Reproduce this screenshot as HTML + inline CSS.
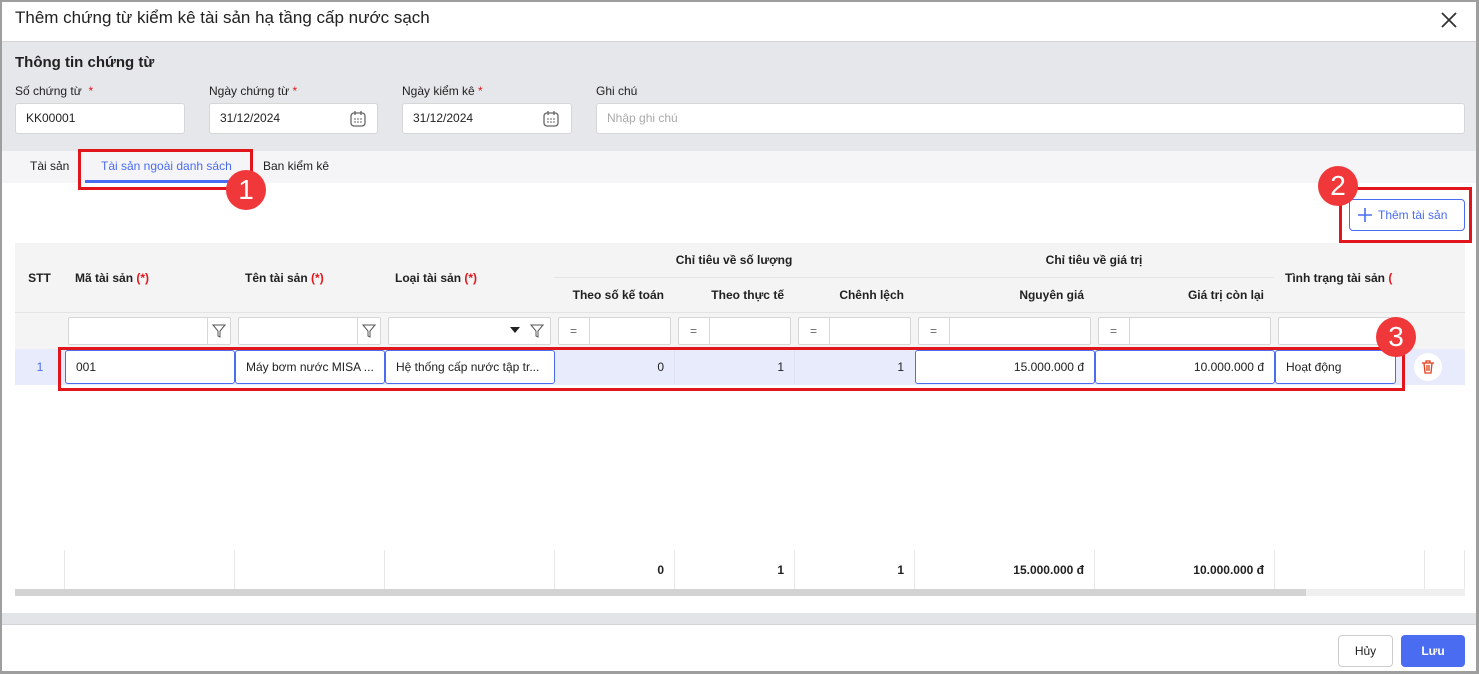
<!DOCTYPE html><html><head><meta charset="utf-8"><style>
*{box-sizing:border-box;margin:0;padding:0}
body{width:1479px;height:674px;overflow:hidden;font-family:"Liberation Sans",sans-serif;font-size:12px;color:#212121;background:#fff;position:relative}
.a{position:absolute}
.inp{position:absolute;background:#fff;border:1px solid #d6d6d6;border-radius:3px;height:31px;padding-left:10px;line-height:29px;font-size:12px}
.th{position:absolute;background:#f4f4f4;border-right:1px solid #e4e4e4;border-bottom:1px solid #e4e4e4;font-weight:bold;font-size:12px;display:flex;align-items:center}
.fc{position:absolute;top:317px;height:28px;background:#fff;border:1px solid #d6d6d6;border-radius:2px}
.cell{position:absolute;top:350px;height:34px;line-height:34px;font-size:12px}
.ed{position:absolute;top:350px;height:34px;line-height:32px;border:1px solid #4a6cf0;border-radius:3px;background:#fff;padding:0 10px;font-size:12px;white-space:nowrap;overflow:hidden}
.tot{position:absolute;top:550px;height:40px;line-height:40px;font-weight:bold;text-align:right;padding-right:10px;border-right:1px solid #e8e8e8}
.red{position:absolute;border:3px solid #e0161c}
.circ{position:absolute;width:40px;height:40px;border-radius:50%;background:#f0383a;color:#fff;font-size:28px;text-align:center;line-height:40px}
.req{color:#e0161c}
</style></head><body>
<div class="a" style="left:0;top:0;width:1479px;height:674px;border:2px solid #9e9e9e;border-right-width:3px;border-bottom-width:3px;z-index:50;pointer-events:none"></div>
<div class="a" style="left:15px;top:8px;font-size:17px">Thêm chứng từ kiểm kê tài sản hạ tầng cấp nước sạch</div>
<svg class="a" style="left:1440px;top:11px" width="18" height="18"><path d="M2 2L16 16M16 2L2 16" stroke="#333" stroke-width="1.8"/></svg>
<div class="a" style="left:0;top:41px;width:1479px;height:110px;background:#e6e7eb;border-top:1px solid #d4d4d8"></div>
<div class="a" style="left:15px;top:54px;font-size:15px;font-weight:bold">Thông tin chứng từ</div>
<div class="a" style="left:15px;top:84px">Số chứng từ &nbsp;<span class="req">*</span></div>
<div class="a" style="left:209px;top:84px">Ngày chứng từ <span class="req">*</span></div>
<div class="a" style="left:402px;top:84px">Ngày kiểm kê <span class="req">*</span></div>
<div class="a" style="left:596px;top:84px">Ghi chú</div>
<div class="inp" style="left:15px;top:103px;width:170px">KK00001</div>
<div class="inp" style="left:209px;top:103px;width:169px">31/12/2024</div>
<div class="inp" style="left:402px;top:103px;width:170px">31/12/2024</div>
<div class="inp" style="left:596px;top:103px;width:869px;color:#aaa">Nhập ghi chú</div>
<svg class="a" style="left:349px;top:110px" width="18" height="18"><rect x="2" y="3" width="14" height="13" rx="3" fill="none" stroke="#666" stroke-width="1.3"/><path d="M6 1v4M12 1v4" stroke="#666" stroke-width="1.3"/><path d="M5 9h2M8 9h2M11 9h2M5 12h2M8 12h2M11 12h2" stroke="#666"/></svg>
<svg class="a" style="left:542px;top:110px" width="18" height="18"><rect x="2" y="3" width="14" height="13" rx="3" fill="none" stroke="#666" stroke-width="1.3"/><path d="M6 1v4M12 1v4" stroke="#666" stroke-width="1.3"/><path d="M5 9h2M8 9h2M11 9h2M5 12h2M8 12h2M11 12h2" stroke="#666"/></svg>
<div class="a" style="left:0;top:151px;width:1479px;height:32px;background:#f5f5f7"></div>
<div class="a" style="left:30px;top:159px">Tài sản</div>
<div class="a" style="left:101px;top:159px;color:#4a6cf0">Tài sản ngoài danh sách</div>
<div class="a" style="left:85px;top:180px;width:157px;height:3px;background:#4a6cf0"></div>
<div class="a" style="left:263px;top:159px">Ban kiểm kê</div>
<div class="a" style="left:1349px;top:199px;width:116px;height:32px;border:1px solid #4a6cf0;border-radius:4px;color:#4a6cf0;line-height:30px;padding-left:28px">Thêm tài sản</div>
<svg class="a" style="left:1357px;top:207px" width="16" height="16"><path d="M8 1v14M1 8h14" stroke="#4a6cf0" stroke-width="1.6"/></svg>
<!-- header -->
<div class="th" style="left:15px;top:243px;width:50px;height:70px;justify-content:center">STT</div>
<div class="th" style="left:64px;top:243px;width:171px;height:70px;padding-left:11px">Mã tài sản&nbsp;<span class="req">(*)</span></div>
<div class="th" style="left:234px;top:243px;width:151px;height:70px;padding-left:11px">Tên tài sản&nbsp;<span class="req">(*)</span></div>
<div class="th" style="left:384px;top:243px;width:171px;height:70px;padding-left:11px">Loại tài sản&nbsp;<span class="req">(*)</span></div>
<div class="th" style="left:554px;top:243px;width:361px;height:35px;justify-content:center">Chỉ tiêu về số lượng</div>
<div class="th" style="left:554px;top:278px;width:121px;height:35px;justify-content:flex-end;padding-right:10px">Theo số kế toán</div>
<div class="th" style="left:674px;top:278px;width:121px;height:35px;justify-content:flex-end;padding-right:10px">Theo thực tế</div>
<div class="th" style="left:794px;top:278px;width:121px;height:35px;justify-content:flex-end;padding-right:10px">Chênh lệch</div>
<div class="th" style="left:914px;top:243px;width:361px;height:35px;justify-content:center">Chỉ tiêu về giá trị</div>
<div class="th" style="left:914px;top:278px;width:181px;height:35px;justify-content:flex-end;padding-right:10px">Nguyên giá</div>
<div class="th" style="left:1094px;top:278px;width:181px;height:35px;justify-content:flex-end;padding-right:10px">Giá trị còn lại</div>
<div class="th" style="left:1274px;top:243px;width:191px;height:70px;padding-left:11px;border-right:none">Tình trạng tài sản&nbsp;<span class="req">(</span></div>
<div class="a" style="left:15px;top:313px;width:1450px;height:36px;background:#f4f4f4"></div>
<div class="fc" style="left:68px;width:163px"><div class="a" style="left:138px;top:0;width:1px;height:26px;background:#d6d6d6"></div><svg class="a" style="left:143px;top:6px" width="14" height="14"><path d="M1 1h12L8 7v6L6 12V7z" fill="none" stroke="#555"/></svg></div>
<div class="fc" style="left:238px;width:143px"><div class="a" style="left:118px;top:0;width:1px;height:26px;background:#d6d6d6"></div><svg class="a" style="left:123px;top:6px" width="14" height="14"><path d="M1 1h12L8 7v6L6 12V7z" fill="none" stroke="#555"/></svg></div>
<div class="fc" style="left:388px;width:163px"><svg class="a" style="left:121px;top:8px" width="10" height="8"><path d="M0 1h10L5 7z" fill="#222"/></svg><svg class="a" style="left:141px;top:6px" width="14" height="14"><path d="M1 1h12L8 7v6L6 12V7z" fill="none" stroke="#555"/></svg></div>
<div class="fc" style="left:558px;width:113px;padding-left:11px;line-height:26px;color:#666">=<div class="a" style="left:30px;top:0;width:1px;height:26px;background:#d6d6d6"></div></div>
<div class="fc" style="left:678px;width:113px;padding-left:11px;line-height:26px;color:#666">=<div class="a" style="left:30px;top:0;width:1px;height:26px;background:#d6d6d6"></div></div>
<div class="fc" style="left:798px;width:113px;padding-left:11px;line-height:26px;color:#666">=<div class="a" style="left:30px;top:0;width:1px;height:26px;background:#d6d6d6"></div></div>
<div class="fc" style="left:918px;width:173px;padding-left:11px;line-height:26px;color:#666">=<div class="a" style="left:30px;top:0;width:1px;height:26px;background:#d6d6d6"></div></div>
<div class="fc" style="left:1098px;width:173px;padding-left:11px;line-height:26px;color:#666">=<div class="a" style="left:30px;top:0;width:1px;height:26px;background:#d6d6d6"></div></div>
<div class="fc" style="left:1278px;width:120px"></div>
<!-- row -->
<div class="a" style="left:15px;top:349px;width:1450px;height:36px;background:#e8ebfb"></div>
<div class="a" style="left:674px;top:349px;width:1px;height:36px;background:#dfe2f0"></div>
<div class="a" style="left:794px;top:349px;width:1px;height:36px;background:#dfe2f0"></div>
<div class="cell" style="left:15px;width:50px;text-align:center;color:#4a6cf0">1</div>
<div class="ed" style="left:65px;width:170px">001</div>
<div class="ed" style="left:235px;width:150px">Máy bơm nước MISA ...</div>
<div class="ed" style="left:385px;width:170px">Hệ thống cấp nước tập tr...</div>
<div class="cell" style="left:554px;width:120px;text-align:right;padding-right:10px">0</div>
<div class="cell" style="left:674px;width:120px;text-align:right;padding-right:10px">1</div>
<div class="cell" style="left:794px;width:120px;text-align:right;padding-right:10px">1</div>
<div class="ed" style="left:915px;width:180px;text-align:right">15.000.000 đ</div>
<div class="ed" style="left:1095px;width:180px;text-align:right">10.000.000 đ</div>
<div class="ed" style="left:1275px;width:121px">Hoạt động</div>
<div class="a" style="left:1414px;top:353px;width:28px;height:28px;border-radius:50%;background:#fff"></div>
<svg class="a" style="left:1420px;top:359px" width="16" height="16"><path d="M2 4h12M6 4V2h4v2M4 4l1 10h6l1-10M7 6v6M9 6v6" fill="none" stroke="#e0421c" stroke-width="1.3"/></svg>
<!-- totals -->
<div class="tot" style="left:15px;width:50px"></div>
<div class="tot" style="left:64px;width:171px"></div>
<div class="tot" style="left:234px;width:151px"></div>
<div class="tot" style="left:384px;width:171px"></div>
<div class="tot" style="left:554px;width:121px">0</div>
<div class="tot" style="left:674px;width:121px">1</div>
<div class="tot" style="left:794px;width:121px">1</div>
<div class="tot" style="left:914px;width:181px">15.000.000 đ</div>
<div class="tot" style="left:1094px;width:181px">10.000.000 đ</div>
<div class="tot" style="left:1274px;width:151px"></div>
<div class="tot" style="left:1424px;width:41px"></div>
<div class="a" style="left:15px;top:589px;width:1450px;height:7px;background:#efefef"></div>
<div class="a" style="left:15px;top:589px;width:1291px;height:7px;background:#d3d3d3"></div>
<div class="a" style="left:0;top:613px;width:1479px;height:12px;background:#e3e4e8;border-bottom:1px solid #d4d4d8"></div>
<div class="a" style="left:1338px;top:635px;width:55px;height:32px;border:1px solid #ccc;border-radius:4px;text-align:center;line-height:30px">Hủy</div>
<div class="a" style="left:1401px;top:635px;width:64px;height:32px;background:#4a6cf0;border-radius:4px;text-align:center;line-height:32px;color:#fff;font-weight:bold">Lưu</div>
<!-- annotations -->
<div class="red" style="left:78px;top:149px;width:175px;height:41px"></div>
<div class="circ" style="left:226px;top:170px">1</div>
<div class="red" style="left:1339px;top:187px;width:133px;height:56px"></div>
<div class="circ" style="left:1318px;top:166px">2</div>
<div class="red" style="left:58px;top:347px;width:1347px;height:44px"></div>
<div class="circ" style="left:1376px;top:317px">3</div>
</body></html>
